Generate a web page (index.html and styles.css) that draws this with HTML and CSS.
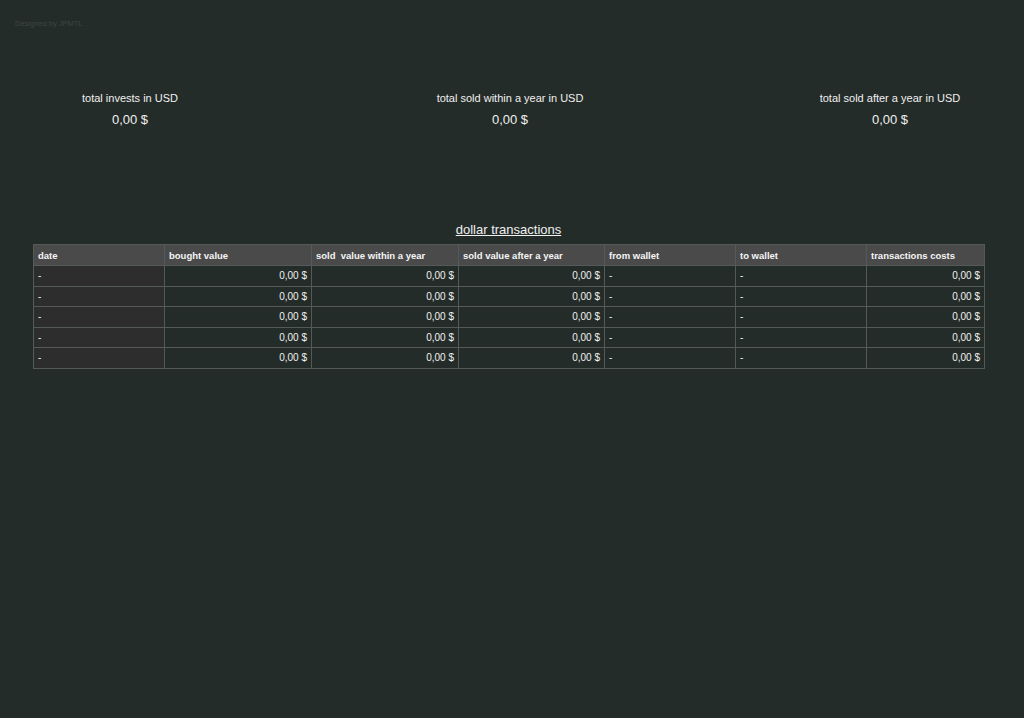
FILE: index.html
```html
<!DOCTYPE html>
<html>
<head>
<meta charset="utf-8">
<link rel="stylesheet" href="styles.css">
</head>
<body>
<div class="page">
  <div class="credit">Designed by JPMTL</div>
  <div class="summary">
    <div class="stat"><div class="stat-label">total invests in USD</div><div class="stat-value">0,00 $</div></div>
    <div class="stat"><div class="stat-label">total sold within a year in USD</div><div class="stat-value">0,00 $</div></div>
    <div class="stat"><div class="stat-label">total sold after a year in USD</div><div class="stat-value">0,00 $</div></div>
  </div>
  <h2 class="title">dollar transactions</h2>
  <table class="tx">
    <thead>
      <tr><th class="c1">date</th><th class="c2">bought value</th><th class="c3">sold&nbsp; value within a year</th><th class="c4">sold value after a year</th><th class="c5">from wallet</th><th class="c6">to wallet</th><th class="c7">transactions costs</th></tr>
    </thead>
    <tbody>
      <tr><td class="date">-</td><td class="num">0,00 $</td><td class="num">0,00 $</td><td class="num">0,00 $</td><td>-</td><td>-</td><td class="num">0,00 $</td></tr>
      <tr><td class="date">-</td><td class="num">0,00 $</td><td class="num">0,00 $</td><td class="num">0,00 $</td><td>-</td><td>-</td><td class="num">0,00 $</td></tr>
      <tr><td class="date">-</td><td class="num">0,00 $</td><td class="num">0,00 $</td><td class="num">0,00 $</td><td>-</td><td>-</td><td class="num">0,00 $</td></tr>
      <tr><td class="date">-</td><td class="num">0,00 $</td><td class="num">0,00 $</td><td class="num">0,00 $</td><td>-</td><td>-</td><td class="num">0,00 $</td></tr>
      <tr><td class="date">-</td><td class="num">0,00 $</td><td class="num">0,00 $</td><td class="num">0,00 $</td><td>-</td><td>-</td><td class="num">0,00 $</td></tr>
    </tbody>
  </table>
</div>
</body>
</html>
```
FILE: styles.css
```css
html, body {
  margin: 0;
  padding: 0;
  background: #242c29;
  height: 100%;
}
body {
  font-family: "Liberation Sans", Arial, sans-serif;
  color: #f0f0f0;
}
.page {
  width: 1017px;
  padding-top: 19px;
}
.credit {
  font-size: 7.5px;
  line-height: 10px;
  color: #3c4542;
  padding-left: 15px;
}
.summary {
  display: grid;
  grid-template-columns: 260px 260px 260px;
  column-gap: 120px;
  margin-top: 62px;
}
.stat {
  text-align: center;
}
.stat-label {
  font-size: 11px;
  line-height: 14px;
}
.stat-value {
  font-size: 13px;
  line-height: 16px;
  margin-top: 7px;
}
.title {
  font-size: 13px;
  font-weight: normal;
  text-decoration: underline;
  text-align: center;
  line-height: 16px;
  margin: 94px 0 0 0;
}
.tx {
  border-collapse: collapse;
  margin: 6px 0 0 33px;
  width: 951px;
  table-layout: fixed;
  font-size: 10px;
}
.tx th, .tx td {
  box-sizing: border-box;
  border: 1px solid #545a58;
  padding: 0 4px;
  height: 20.5px;
  text-align: left;
  white-space: nowrap;
}
.tx th {
  background: #4a4a4a;
  font-weight: bold;
  font-size: 9.5px;
  color: #f5f5f5;
  height: 21px;
}
.tx td.date {
  background: #2d2d2d;
}
.tx td.num {
  text-align: right;
}
.c1 { width: 131px; }
.c2 { width: 147px; }
.c3 { width: 147px; }
.c4 { width: 146px; }
.c5 { width: 131px; }
.c6 { width: 131px; }
.c7 { width: 118px; }
```
